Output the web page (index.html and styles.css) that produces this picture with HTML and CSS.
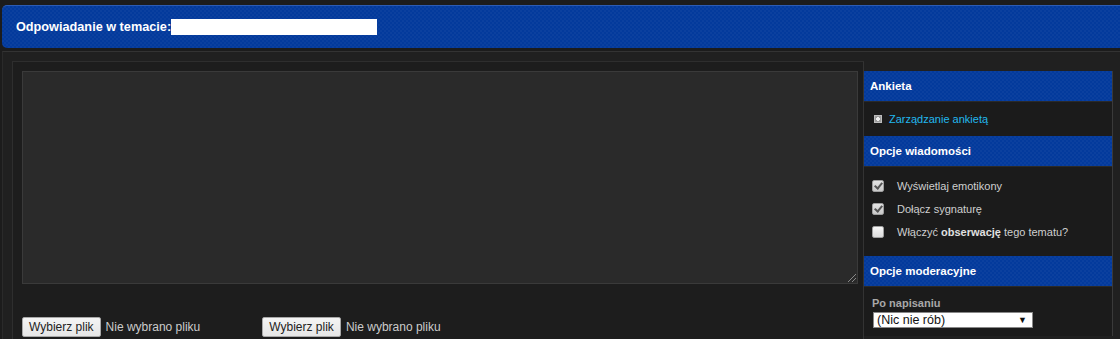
FILE: index.html
```html
<!DOCTYPE html>
<html lang="pl">
<head>
<meta charset="utf-8">
<title>Odpowiadanie w temacie</title>
<link rel="stylesheet" href="styles.css">
</head>
<body>
<div class="page">
  <div class="topbar">
    <h2 class="topbar-title">Odpowiadanie w temacie:<span class="redacted"></span></h2>
  </div>
  <div class="outer">
    <div class="main">
      <div class="editor">
        <div class="textarea"><span class="grip"></span></div>
      </div>
      <div class="files">
        <div class="file"><span class="file-btn">Wybierz plik</span><span class="file-name">Nie wybrano pliku</span></div>
        <div class="file"><span class="file-btn">Wybierz plik</span><span class="file-name">Nie wybrano pliku</span></div>
      </div>
    </div>
    <aside class="side">
      <div class="side-head">Ankieta</div>
      <div class="side-body poll">
        <span class="bullet"></span><a class="side-link" href="#">Zarządzanie ankietą</a>
      </div>
      <div class="side-head">Opcje wiadomości</div>
      <div class="side-body options">
        <label class="opt"><span class="cb checked"></span><span>Wyświetlaj emotikony</span></label>
        <label class="opt"><span class="cb checked"></span><span>Dołącz sygnaturę</span></label>
        <label class="opt"><span class="cb"></span><span>Włączyć <b>obserwację</b> tego tematu?</span></label>
      </div>
      <div class="side-head">Opcje moderacyjne</div>
      <div class="side-body mod">
        <div class="mod-label">Po napisaniu</div>
        <div class="select"><span>(Nic nie rób)</span><span class="arrow">▼</span></div>
      </div>
    </aside>
  </div>
</div>
</body>
</html>
```

FILE: styles.css
```css
html, body {
  margin: 0;
  padding: 0;
  overflow: hidden;
  background: #1c1c1c;
  font-family: "Liberation Sans", Arial, sans-serif;
  font-size: 11px;
  color: #cccccc;
}

.page {
  width: 1140px;
  padding-top: 5px;
}

.topbar {
  margin-left: 2px;
  height: 42px;
  background-color: #033a9c;
  background-image:
    linear-gradient(45deg, rgba(255,255,255,0.03) 25%, transparent 25%, transparent 75%, rgba(255,255,255,0.03) 75%),
    linear-gradient(45deg, rgba(255,255,255,0.03) 25%, transparent 25%, transparent 75%, rgba(255,255,255,0.03) 75%);
  background-size: 4px 4px;
  background-position: 0 0, 2px 2px;
  border-top: 1px solid #2c5cb4;
  border-radius: 5px;
  display: flex;
  align-items: center;
}

.topbar-title {
  margin: 0;
  padding-left: 14px;
  font-size: 12.7px;
  font-weight: bold;
  color: #ffffff;
  display: flex;
  align-items: center;
}

.redacted {
  display: inline-block;
  width: 206px;
  height: 16px;
  background: #ffffff;
}

.outer {
  margin-top: 3px;
  margin-left: 2px;
  border-top: 1px solid #333333;
  border-left: 1px solid #2a2a2a;
  background: #202020;
  padding: 9px 0 0 9px;
  display: flex;
  align-items: flex-start;
}

.main {
  width: 852px;
  flex: none;
  border: 1px solid #2e2e2e;
  border-right-color: #333333;
  background: #1d1d1d;
  padding: 9px 5px 0 9px;
  box-sizing: border-box;
  height: 290px;
}

.textarea {
  position: relative;
  height: 211px;
  border: 1px solid #3a3a3a;
  background: #2a2a2a;
}

.grip {
  position: absolute;
  right: 1px;
  bottom: 1px;
  width: 8px;
  height: 8px;
  background: linear-gradient(135deg, transparent 45%, #888 45%, #888 52%, transparent 52%, transparent 72%, #888 72%, #888 80%, transparent 80%);
}

.files {
  display: flex;
  gap: 62px;
  margin-top: 33px;
}

.file {
  display: flex;
  align-items: center;
  gap: 5px;
  font-size: 12px;
}

.file-btn {
  display: inline-block;
  height: 18px;
  line-height: 18px;
  padding: 0 6px;
  background: linear-gradient(#f4f4f4, #e6e6e6);
  border: 1px solid #a8a8a8;
  border-radius: 2px;
  color: #222222;
}

.file-name {
  color: #cccccc;
}

.side {
  width: 248px;
  flex: none;
  margin-top: 10px;
  border-right: 1px solid #3a3a3a;
  background: #1b1b1b;
}

.side-head {
  height: 30px;
  line-height: 30px;
  padding-left: 6px;
  background-color: #033a9c;
  background-image:
    linear-gradient(45deg, rgba(255,255,255,0.03) 25%, transparent 25%, transparent 75%, rgba(255,255,255,0.03) 75%),
    linear-gradient(45deg, rgba(255,255,255,0.03) 25%, transparent 25%, transparent 75%, rgba(255,255,255,0.03) 75%);
  background-size: 4px 4px;
  background-position: 0 0, 2px 2px;
  border-bottom: 1px solid #2a2a2a;
  color: #ffffff;
  font-weight: bold;
  font-size: 11.5px;
}

.side-body {
  padding: 0 8px;
}

.poll {
  height: 34px;
  display: flex;
  align-items: center;
  padding-left: 10px;
  gap: 7px;
}

.bullet {
  position: relative;
  width: 6px;
  height: 6px;
  background: #9a9a9a;
  border: 1px solid #bdbdbd;
}

.bullet::before,
.bullet::after {
  content: "";
  position: absolute;
  background: #f0f0f0;
}

.bullet::before {
  left: 2px;
  top: 1px;
  width: 2px;
  height: 4px;
}

.bullet::after {
  left: 1px;
  top: 2px;
  width: 4px;
  height: 2px;
}

.side-link {
  color: #22b8ee;
  text-decoration: none;
}

.options {
  height: 89px;
  padding-top: 12px;
  box-sizing: border-box;
  display: flex;
  flex-direction: column;
  gap: 9px;
}

.opt {
  display: flex;
  align-items: center;
  gap: 13px;
  height: 14px;
  color: #cfcfcf;
}

.opt b {
  color: #e0e0e0;
}

.cb {
  position: relative;
  width: 10px;
  height: 10px;
  border: 1px solid #9e9e9e;
  border-radius: 2px;
  background: linear-gradient(#f6f6f6, #dcdcdc);
  flex: none;
}

.cb.checked {
  background: linear-gradient(#e4e4e4, #c8c8c8);
}

.cb.checked::after {
  content: "";
  position: absolute;
  left: 3px;
  top: 0px;
  width: 3px;
  height: 6px;
  border-right: 2px solid #555;
  border-bottom: 2px solid #555;
  transform: rotate(40deg);
}

.mod {
  padding-top: 10px;
  padding-bottom: 8px;
}

.mod-label {
  color: #a8a8a8;
  font-weight: bold;
  margin-bottom: 3px;
}

.select {
  width: 160px;
  height: 16px;
  box-sizing: border-box;
  margin-left: 1px;
  border: 1px solid #888;
  background: #ffffff;
  color: #111111;
  font-size: 12.5px;
  display: flex;
  align-items: center;
  justify-content: space-between;
  padding: 0 5px 0 3px;
}

.arrow {
  font-size: 9px;
}
```
